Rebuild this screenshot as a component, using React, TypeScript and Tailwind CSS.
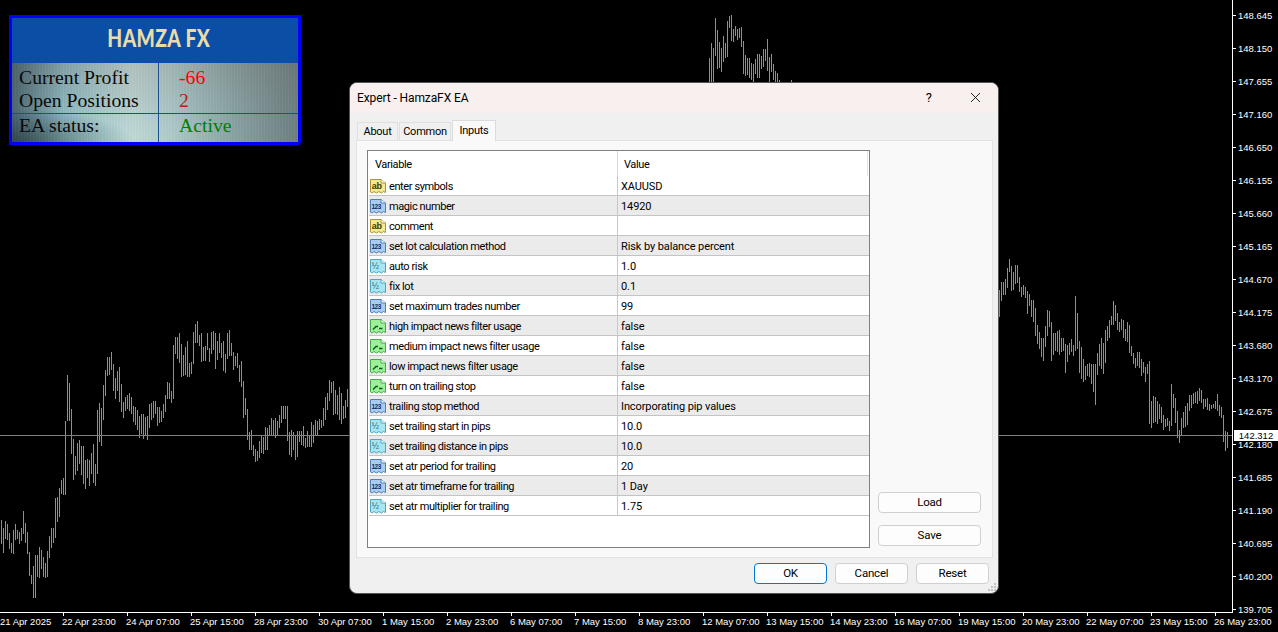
import { X } from "lucide-react"

type Kind = "ab" | "int" | "dbl" | "bool"

// bars read off the chart: [top, bottom]
const seg1 = [[60,128],[84,155],[63,115],[73,118],[100,143],[128,157],[90,158],[72,118],[90,115],[95,130],[84,120],[33,100],[70,125],[96,160],[155,225],[225,250],[198,290],[165,290],[165,228],[142,232],[150,205],[170,228],[190,232],[153,228],[108,170],[84,142],[84,125]]
const seg2 = [[565,680],[560,632],[535,618],[510,550],[505,552],[333,552],[195,330],[219,330],[297,430],[387,507],[438,492],[400,480],[390,460],[408,492],[408,520],[450,533],[447,502],[450,525],[430,490],[402,515],[462,525],[300,490],[280,393],[295,405],[225,327],[180,255],[140,195],[140,192],[126,178],[162,240],[205,265],[183,240],[170,272],[222,303],[275,322],[262,300],[255,295],[250,300],[262,310],[288,333],[292,343],[300,358],[318,382],[312,370],[312,385],[320,372],[318,387],[282,352],[280,327],[273,320],[273,310],[292,346],[290,337],[303,333],[282,320],[255,303],[215,265],[220,263],[243,277],[105,265],[82,130],[82,145],[70,155],[102,197],[135,195],[112,192],[93,197],[160,197],[157,190],[66,158],[42,95],[33,95],[75,105],[69,152],[112,150],[108,150],[69,118],[115,152],[66,128],[63,118],[69,173],[93,147],[70,125],[100,140],[93,180],[133,185],[69,145],[60,135],[100,135],[125,177],[138,165],[128,172],[165,212],[153,228],[213,320],[264,312],[297,387],[367,417],[360,417],[405,435],[417,453],[423,450],[393,442],[375,425],[380,430],[350,417],[355,417],[345,375],[323,372],[330,375],[323,382],[333,372],[315,350],[288,335],[288,325],[288,325],[288,390],[365,432],[360,438],[365,417],[375,447],[363,437],[363,392],[363,403],[348,405],[384,410],[363,407],[375,408],[336,408],[345,396],[330,375],[333,375],[327,357],[330,352],[295,345],[262,327],[250,297],[210,270],[216,245],[213,312],[240,310],[255,313],[232,327],[250,340],[288,325],[270,320],[237,288]]
const seg3 = [[58,83],[43,83],[48,81],[18,55],[30,68],[42,67],[48,71],[36,61],[43,57],[21,56],[16,27],[15,40],[29,41],[26,35],[29,39],[28,37],[27,46],[41,73],[55,75],[58,74],[58,77],[63,79],[64,82],[59,73],[54,77],[54,77],[56,68],[49,66],[49,60],[39,70],[57,82],[54,71],[64,79],[71,83],[73,83],[80,83]]
const seg4 = [[120,197],[96,150],[96,132],[87,132],[54,110],[27,63],[48,120],[66,117],[45,98],[45,96],[81,123],[111,138],[105,132],[111,141],[123,189],[132,165],[150,198],[150,213],[174,255],[225,279],[246,294],[264,318],[264,330],[228,288],[180,255],[183,228],[216,330],[249,312],[249,300],[243,303],[240,312],[264,303],[264,300],[282,366],[285,333],[279,312],[267,303],[285,315],[138,300],[189,294],[273,366],[291,384],[327,393],[348,387],[342,375],[339,378],[342,399],[342,423],[342,462],[309,372],[282,345],[264,354],[279,369],[240,336],[228,270],[210,261],[198,222],[153,222],[165,210],[189,237],[216,243],[207,237],[210,261],[237,270],[216,273],[225,306],[288,315],[309,340],[324,351],[306,345],[306,350],[327,375],[336,366],[351,393],[342,369],[333,518],[453,531],[438,516],[441,513],[453,519],[462,504],[471,516],[495,537],[507,528],[504,525],[513,540],[402,525],[432,471],[444,516],[483,561],[540,576],[504,555],[486,531],[468,528],[459,522],[435,480],[435,471],[429,459],[426,456],[423,459],[414,450],[420,456],[447,474],[447,468],[444,477],[462,480],[465,474],[462,471],[453,474],[432,480],[465,495],[471,501],[495,573],[543,600],[546,591]]

const toPath = (base: number, start: number, data: number[][], scale = 3) =>
    data.map(([t, b], i) => `M${start + 2 * i + 0.5} ${Math.round(base + t / scale)}V${Math.round(base + b / scale) + 1}`).join("")

const barsPath =
    toPath(500, 1, seg1) +
    toPath(310, 55, seg2) +
    toPath(0, 709, seg3, 1) +
    "M791.5 80V84" +
    toPath(250, 999, seg4)

const prices = ["148.645","148.150","147.655","147.160","146.650","146.155","145.660","145.165","144.670","144.175","143.680","143.170","142.675","142.180","141.685","141.190","140.695","140.200","139.705"]
const dates = ["21 Apr 2025","22 Apr 23:00","24 Apr 07:00","25 Apr 15:00","28 Apr 23:00","30 Apr 07:00","1 May 15:00","2 May 23:00","6 May 07:00","7 May 15:00","8 May 23:00","12 May 07:00","13 May 15:00","14 May 23:00","16 May 07:00","19 May 15:00","20 May 23:00","22 May 07:00","23 May 15:00","26 May 23:00"]

const rows: { kind: Kind; name: string; value: string }[] = [
    { kind: "ab", name: "enter symbols", value: "XAUUSD" },
    { kind: "int", name: "magic number", value: "14920" },
    { kind: "ab", name: "comment", value: "" },
    { kind: "int", name: "set lot calculation method", value: "Risk by balance percent" },
    { kind: "dbl", name: "auto risk", value: "1.0" },
    { kind: "dbl", name: "fix lot", value: "0.1" },
    { kind: "int", name: "set maximum trades number", value: "99" },
    { kind: "bool", name: "high impact news filter usage", value: "false" },
    { kind: "bool", name: "medium impact news filter usage", value: "false" },
    { kind: "bool", name: "low impact news filter usage", value: "false" },
    { kind: "bool", name: "turn on trailing stop", value: "false" },
    { kind: "int", name: "trailing stop method", value: "Incorporating pip values" },
    { kind: "dbl", name: "set trailing start in pips", value: "10.0" },
    { kind: "dbl", name: "set trailing distance in pips", value: "10.0" },
    { kind: "int", name: "set atr period for trailing", value: "20" },
    { kind: "int", name: "set atr timeframe for trailing", value: "1 Day" },
    { kind: "dbl", name: "set atr multiplier for trailing", value: "1.75" },
]

const iconColors: Record<Kind, { fill: string; line: string; ink: string }> = {
    ab: { fill: "#f6e88e", line: "#a8963c", ink: "#3f3806" },
    int: { fill: "#a9cdf0", line: "#4f7fb5", ink: "#0e2c66" },
    dbl: { fill: "#a6e6f2", line: "#4fa5bd", ink: "#1d6478" },
    bool: { fill: "#9df09a", line: "#4aa84a", ink: "#0d5a12" },
}

const TypeIcon = ({ kind }: { kind: Kind }) => {
    const c = iconColors[kind]
    return (
        <svg width="16" height="16" viewBox="0 0 16 16" className="shrink-0">
            <path
                d="M0.5 1.5H11L15.5 5V14.5L13.5 13.5L11.5 15L9 13.5L6.5 15L4 13.5L2 15L0.5 14Z"
                fill={c.fill}
                stroke={c.line}
                strokeWidth="1"
                strokeLinejoin="round"
            />
            <path d="M11 1.5V5H15.5" fill="#ffffff" stroke={c.line} strokeWidth="1" />
            {kind === "ab" && (
                <text x="1.8" y="11" fontSize="9" fontWeight="700" fontFamily="'Liberation Sans', sans-serif" fill={c.ink}>ab</text>
            )}
            {kind === "int" && (
                <text x="1.4" y="11" fontSize="6.5" fontWeight="700" fontFamily="'Liberation Sans', sans-serif" fill={c.ink}>123</text>
            )}
            {kind === "dbl" && (
                <text x="1.8" y="10.5" fontSize="8.5" fontFamily="'Liberation Sans', sans-serif" fill={c.ink}>½</text>
            )}
            {kind === "bool" && (
                <path d="M3 11.5L6 8.5H8M9 10.5H12.5" fill="none" stroke={c.ink} strokeWidth="1.4" />
            )}
        </svg>
    )
}

const DialogButton = ({ label, primary = false, className = "" }: { label: string; primary?: boolean; className?: string }) => (
    <button
        className={`h-[21px] rounded-[4px] border bg-[#fdfdfd] pt-px text-[11.5px] tracking-[-0.2px] text-black ${
            primary ? "border-[#0078d4]" : "border-[#d0d0d0]"
        } ${className}`}
    >
        {label}
    </button>
)

const ChartAxes = () => (
    <div className="flex h-[632px] w-[1278px] flex-col overflow-hidden bg-black font-['Liberation_Sans',sans-serif] text-[9.5px] text-white">
        <div className="flex h-[613px] shrink-0">
            <div className="flex w-[1232px] shrink-0 flex-col">
                <svg width="1232" height="612" viewBox="0 0 1232 612" className="shrink-0">
                    <path d={barsPath} fill="none" stroke="#28dc14" strokeWidth="1" shapeRendering="crispEdges" />
                    <path d="M0 435.5H1232" fill="none" stroke="#808080" strokeWidth="1" shapeRendering="crispEdges" />
                </svg>
                <div className="h-px bg-white" />
            </div>
            <div className="flex w-[46px] shrink-0 flex-col border-l border-white">
                {prices.map((p) => (
                    <div key={p} className="flex h-[33px] shrink-0 items-center">
                        <span className="mb-[2px] h-px w-[3px] shrink-0 bg-white" />
                        <span className="mb-[2px] ml-[2px] leading-none">{p}</span>
                    </div>
                ))}
            </div>
        </div>
        <div className="-ml-[2px] flex">
            {dates.map((d, i) => (
                <div key={d} className="flex w-[64px] shrink-0 flex-col">
                    <span className="ml-px h-[3px] w-px bg-white" />
                    <span className={`whitespace-nowrap leading-[12px] ${i === 0 ? "pl-[2px]" : ""}`}>{d}</span>
                </div>
            ))}
        </div>
    </div>
)

const HamzaPanel = () => (
    <div className="absolute left-[9px] top-[15px] flex h-[130px] w-[292px] flex-col border-[3px] border-[#0000ff] font-['Liberation_Serif',serif]">
        <div className="flex h-[45px] shrink-0 items-center justify-center bg-[#0b4ea6] pb-[7px] pl-[8px] font-['Lato',sans-serif]">
            <span className="inline-block scale-x-[0.77] text-[25px] font-black leading-none tracking-[0.5px] text-[#e8dca8]">HAMZA FX</span>
        </div>
        <div className="grid flex-1 grid-cols-[147px_1fr] grid-rows-[51px_1fr] bg-[repeating-linear-gradient(90deg,rgba(255,255,255,0.025)_0px,rgba(255,255,255,0.025)_1px,rgba(0,0,0,0.02)_1px,rgba(0,0,0,0.02)_3px),radial-gradient(ellipse_at_0%_100%,rgba(30,50,60,0.65)_0%,rgba(30,50,60,0)_30%),linear-gradient(90deg,rgba(50,70,80,0.7)_0%,rgba(120,160,170,0.25)_18%,rgba(220,225,215,0.5)_42%,rgba(205,212,204,0.4)_55%,rgba(130,140,135,0.4)_78%,rgba(90,100,100,0.55)_100%),radial-gradient(ellipse_at_32%_100%,#a8dbe0_0%,#8fb4ba_45%,#7e8e90_100%)] text-[19.7px] leading-[23px] text-[#0a0a0a]">
            <div className="border-b border-r border-[#1c4f8c] pl-[7px] pt-[3px]">
                <div>Current Profit</div>
                <div>Open Positions</div>
            </div>
            <div className="border-b border-[#1c4f8c] pl-[20px] pt-[3px]">
                <div className="text-[#ff0000]">-66</div>
                <div className="text-[#b22222]">2</div>
            </div>
            <div className="border-r border-[#1c4f8c] pl-[7px]">EA status:</div>
            <div className="pl-[20px] text-[#008000]">Active</div>
        </div>
        <span className="absolute -bottom-[3px] -right-[3px] h-[2px] w-[2px] bg-black" />
    </div>
)

const InputsTable = () => (
    <div className="flex h-[398px] w-[503px] shrink-0 flex-col border border-[#808080] bg-white tracking-[-0.4px]">
        <div className="flex h-[25px] shrink-0 items-center">
            <div className="flex h-full w-[250px] items-center border-r border-[#d8d8d8] pl-[7px]">
                <span className="mt-[4px]">Variable</span>
            </div>
            <div className="mr-[1px] flex h-full flex-1 items-center border-r border-[#e4e4e4] pl-[6px]">
                <span className="mt-[4px]">Value</span>
            </div>
        </div>
        {rows.map((row, i) => (
            <div
                key={row.name}
                className={`ml-px flex h-[20px] shrink-0 border-b border-[#c4c4c4] ${i % 2 === 1 ? "bg-[#ebebeb]" : "bg-white"}`}
            >
                <div className="flex w-[249px] items-center gap-[3px] border-r border-[#c8c8c8] pl-px">
                    <TypeIcon kind={row.kind} />
                    <span className="mt-[4px] whitespace-nowrap">{row.name}</span>
                </div>
                <div className="flex flex-1 items-center pl-[3px] tracking-[-0.1px]">
                    <span className="mt-[4px]">{row.value}</span>
                </div>
            </div>
        ))}
    </div>
)

const ExpertDialog = () => (
    <div className="absolute left-[349px] top-[82px] flex h-[512px] w-[650px] flex-col overflow-hidden rounded-[8px] border border-[#555555] bg-[#f0f0f0] font-['Roboto',sans-serif] text-[11px] text-black">
        <div className="flex h-[30px] shrink-0 items-center bg-[#f8f0ee] pl-[7px]">
            <span className="text-[12px] tracking-[-0.1px]">Expert - HamzaFX EA</span>
            <span className="ml-auto text-[13px]">?</span>
            <X size={17} strokeWidth={1.2} className="mb-px ml-[35px] mr-[14px]" />
        </div>
        <div className="flex h-[27px] shrink-0 items-end pl-[7px] text-[11px] tracking-[-0.25px]">
            <div className="flex h-[18px] w-[41px] items-center justify-center border border-b-0 border-[#e0e0e0] bg-[#f0f0f0] pt-[2px]">About</div>
            <div className="ml-px flex h-[18px] w-[52px] items-center justify-center border border-b-0 border-[#e0e0e0] bg-[#f0f0f0] pt-[2px]">Common</div>
            <div className="relative top-px ml-px flex h-[21px] w-[44px] items-start justify-center border border-b-0 border-[#dcdcdc] bg-[#f9f9f9] pt-[2px]">Inputs</div>
        </div>
        <div className="mx-[6px] mr-[5px] flex h-[418px] shrink-0 gap-[8px] border border-[#e2e2e2] bg-[#f9f9f9] pl-[10px] pt-[9px]">
            <InputsTable />
            <div className="flex h-[398px] w-[103px] flex-col justify-end gap-[12px] pb-[2px]">
                <DialogButton label="Load" className="w-full" />
                <DialogButton label="Save" className="w-full" />
            </div>
        </div>
        <div className="flex justify-end gap-[8px] pr-[9px] pt-[5px]">
            <DialogButton label="OK" primary className="w-[73px]" />
            <DialogButton label="Cancel" className="w-[73px]" />
            <DialogButton label="Reset" className="w-[73px]" />
        </div>
        <svg width="8" height="8" viewBox="0 0 8 8" className="absolute bottom-[2px] right-[2px]">
            <path d="M6 0h2v2H6zM3 3h2v2H3zM6 3h2v2H6zM0 6h2v2H0zM3 6h2v2H3zM6 6h2v2H6z" fill="#c0c0c0" />
        </svg>
    </div>
)

export default function App() {
    return (
        <div className="relative h-[632px] w-[1278px] overflow-hidden bg-black">
            <ChartAxes />
            <div className="absolute left-[1234px] top-[430px] flex h-[11px] w-[44px] items-center justify-center bg-white font-['Liberation_Sans',sans-serif] text-[9.5px] leading-none text-black">
                142.312
            </div>
            <HamzaPanel />
            <ExpertDialog />
        </div>
    )
}
